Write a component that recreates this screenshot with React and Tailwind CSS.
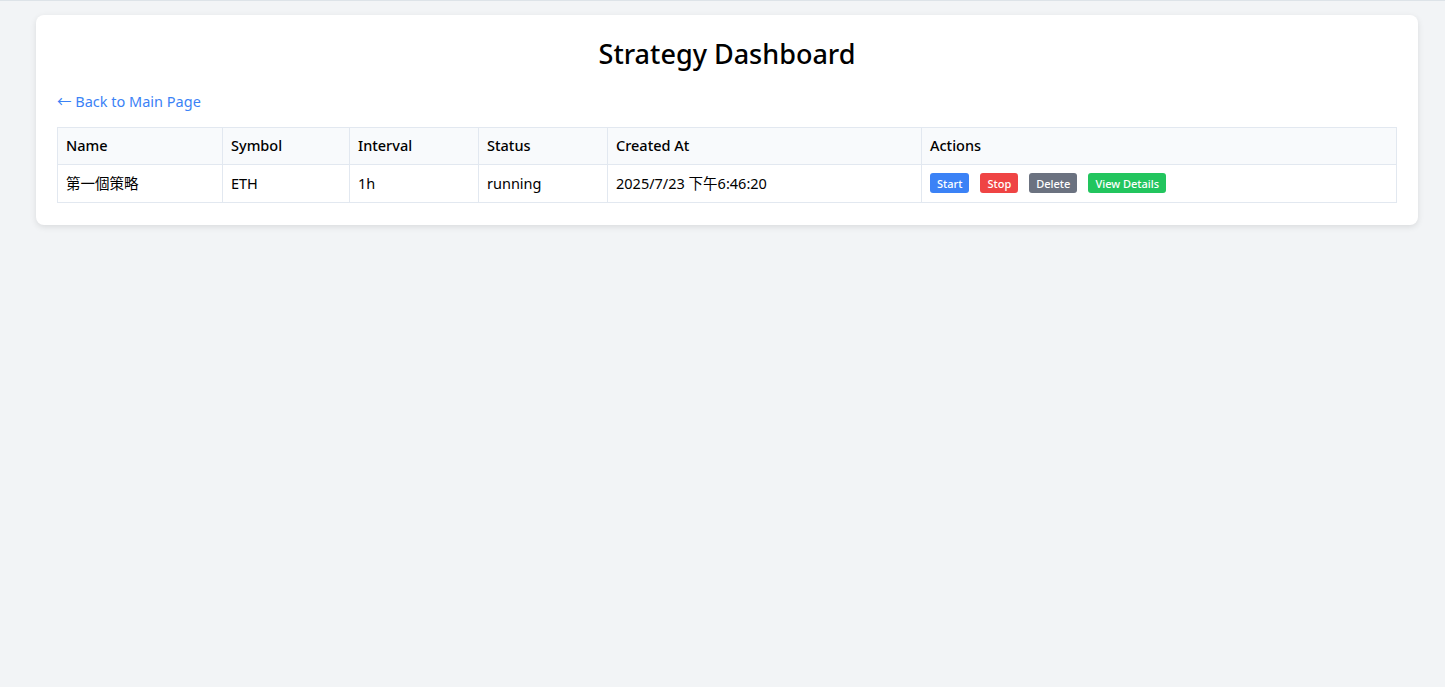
import React from "react";

export default function App() {
  const td = "border border-[#e2e8f0] px-2 pt-[8px] pb-[9px]";
  const btn = "h-[20px] px-[7px] rounded-[3px] text-white text-[11px] font-medium leading-none";
  return (
    <div className="min-h-[687px] bg-[#f2f4f6] border-t border-[#dde3e8] pt-[14px] pl-[36px] pr-[27px] font-['Noto_Sans','Noto_Sans_CJK_TC',sans-serif] text-black">
      <div className="bg-white rounded-lg shadow-[0_2px_6px_rgba(0,0,0,0.1)] px-[21px] pt-[20px] pb-[22px]">
        <h1 className="text-center text-[27px] leading-[37px] font-medium">Strategy Dashboard</h1>
        <div className="mt-[19px] mb-[16px] h-[20px] flex items-center">
          <a className="text-[#3b82f6] text-[14.5px] leading-[20px]">← Back to Main Page</a>
        </div>
        <table className="w-full border-collapse text-[14.5px] leading-[20px]">
          <thead>
            <tr className="bg-[#f8fafc]">
              {["Name", "Symbol", "Interval", "Status", "Created At", "Actions"].map((h, i) => (
                <th
                  key={h}
                  className={
                    "border border-[#e2e8f0] px-2 pt-[7px] pb-[9px] text-left font-medium " +
                    ["w-[165px]", "w-[127px]", "w-[129px]", "w-[129px]", "w-[314px]", ""][i]
                  }
                >
                  {h}
                </th>
              ))}
            </tr>
          </thead>
          <tbody>
            <tr>
              <td className={td}>第一個策略</td>
              <td className={td}>ETH</td>
              <td className={td}>1h</td>
              <td className={td}>running</td>
              <td className={td}>2025/7/23 下午6:46:20</td>
              <td className={td}>
                <div className="flex items-center gap-[11px]">
                  <button className={btn + " bg-[#3b82f6]"}>Start</button>
                  <button className={btn + " bg-[#ef4444]"}>Stop</button>
                  <button className={btn + " bg-[#6b7280]"}>Delete</button>
                  <button className={btn + " bg-[#22c55e]"}>View Details</button>
                </div>
              </td>
            </tr>
          </tbody>
        </table>
      </div>
    </div>
  );
}
